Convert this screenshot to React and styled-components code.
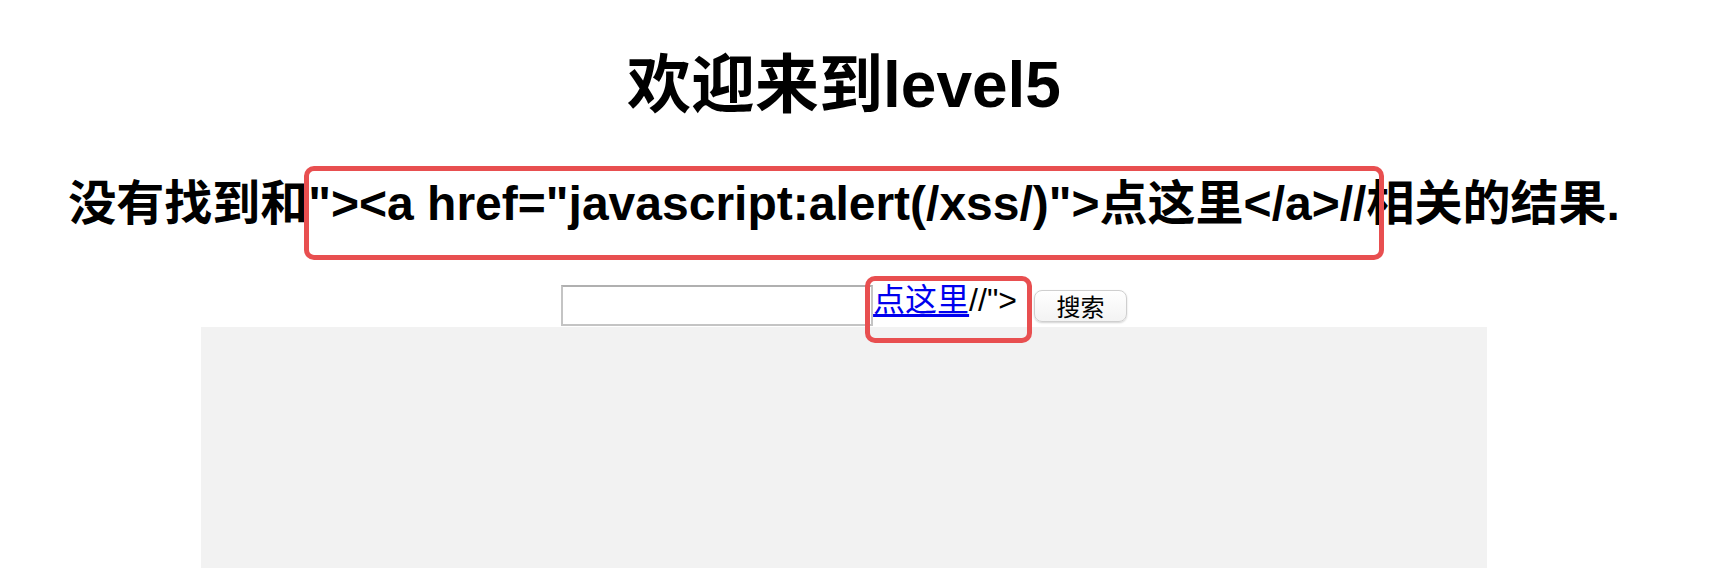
import styled, { createGlobalStyle } from "styled-components";

const GlobalStyle = createGlobalStyle`
  html, body {
    margin: 0;
    padding: 0;
    background: #ffffff;
    overflow: hidden;
  }
`;

const Page = styled.div`
  position: relative;
  width: 1688px;
  padding-top: 48px;
  text-align: center;
  color: #000000;
  font-family: "Liberation Sans", "Noto Sans CJK SC", sans-serif;
`;

const Title = styled.h1`
  margin: 0;
  font-size: 64px;
  line-height: 74px;
  font-weight: bold;
`;

const Result = styled.h2`
  margin: 54px 0 0;
  font-size: 48px;
  line-height: 56px;
  font-weight: bold;
  white-space: nowrap;
`;

const SearchForm = styled.form`
  display: flex;
  justify-content: center;
  align-items: flex-start;
  margin-top: 50px;
`;

const SearchInput = styled.input`
  box-sizing: border-box;
  width: 312px;
  height: 41px;
  margin: 3px 0 0;
  padding: 0 4px;
  border: 2px solid #c4c4c4;
  border-top-color: #b0b0b0;
  background: #ffffff;
  outline: none;
`;

const Echo = styled.span`
  font-size: 32px;
  line-height: 37px;
  white-space: nowrap;
`;

const XssLink = styled.a`
  color: #0000ee;
  text-decoration: underline;
  text-underline-offset: 3px;
`;

const SearchButton = styled.button`
  box-sizing: border-box;
  width: 93px;
  height: 32px;
  margin: 8px 0 0 17px;
  padding: 0;
  border: 1px solid #cfcfcf;
  border-radius: 8px;
  background: linear-gradient(#ffffff, #f3f3f3);
  box-shadow: 0 1px 2px rgba(0, 0, 0, 0.18);
  font-family: "Noto Sans CJK SC", sans-serif;
  font-size: 24px;
  line-height: 30px;
  color: #000000;
`;

const Canvas = styled.div`
  width: 1286px;
  height: 241px;
  margin: 1px auto 0;
  background: #f2f2f2;
`;

// red annotation frames drawn over the screenshot
const Mark = styled.div`
  position: absolute;
  box-sizing: border-box;
  left: ${(p) => p.$left}px;
  top: ${(p) => p.$top}px;
  width: ${(p) => p.$width}px;
  height: ${(p) => p.$height}px;
  border: 5px solid #e84f50;
  border-radius: 10px;
  pointer-events: none;
`;

export default function App() {
  return (
    <>
      <GlobalStyle />
      <Page>
        <Title>欢迎来到level5</Title>
        <Result>
          没有找到和"&gt;&lt;a href="javascript:alert(/xss/)"&gt;点这里&lt;/a&gt;//相关的结果.
        </Result>
        <SearchForm onSubmit={(e) => e.preventDefault()}>
          <SearchInput name="keyword" />
          <Echo>
            <XssLink href="#">点这里</XssLink>//"&gt;
          </Echo>
          <SearchButton type="submit">搜索</SearchButton>
        </SearchForm>
        <Canvas />
        <Mark $left={304} $top={166} $width={1080} $height={94} />
        <Mark $left={865} $top={276} $width={167} $height={67} />
      </Page>
    </>
  );
}
